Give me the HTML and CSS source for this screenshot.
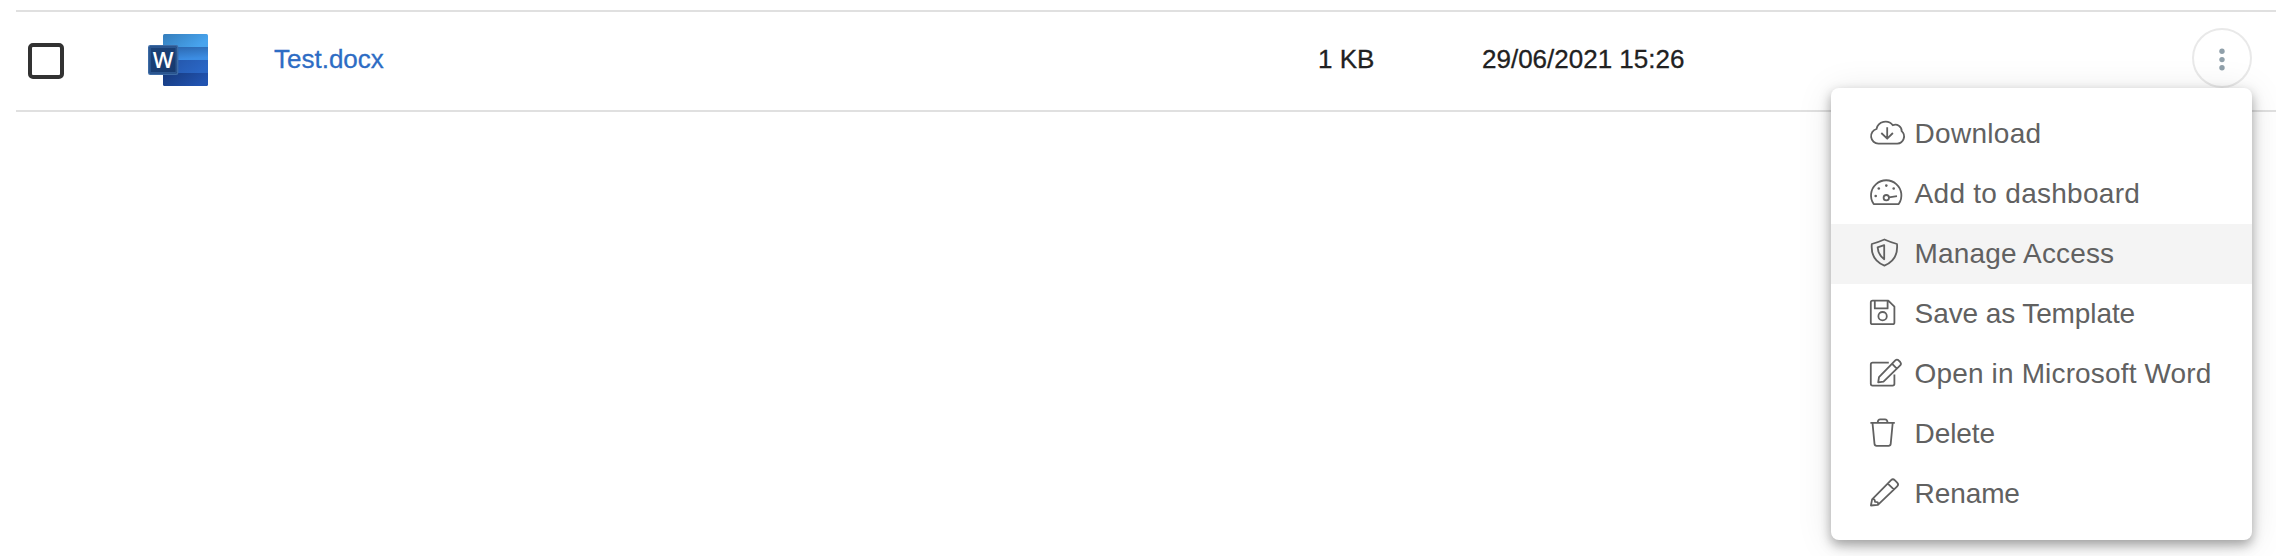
FILE: index.html
```html
<!DOCTYPE html>
<html lang="en">
<head>
<meta charset="utf-8">
<title>Files</title>
<link rel="stylesheet" href="styles.css">
</head>
<body>
<main class="files">
  <div class="row">
    <span class="checkbox" role="checkbox" aria-checked="false"></span>
    <svg class="file-icon" width="60" height="52" viewBox="0 0 60 52">
      <defs>
        <linearGradient id="b1" x2="1" y2=".4"><stop stop-color="#347dbb"/><stop offset="1" stop-color="#48a4ee"/></linearGradient>
        <linearGradient id="b2" x2=".3" y2="1"><stop stop-color="#2b65ac"/><stop offset="1" stop-color="#3c8de3"/></linearGradient>
        <linearGradient id="b3" x2="1" y2=".4"><stop stop-color="#2353a5"/><stop offset="1" stop-color="#2a66c4"/></linearGradient>
        <linearGradient id="b4" x2="1" y2=".4"><stop stop-color="#16397b"/><stop offset="1" stop-color="#2153b0"/></linearGradient>
        <linearGradient id="tile" x2="1" y2="1"><stop stop-color="#1b4379"/><stop offset="1" stop-color="#17396e"/></linearGradient>
        <clipPath id="page"><rect x="15" width="45" height="52" rx="1.5"/></clipPath>
      </defs>
      <g clip-path="url(#page)">
        <path fill="url(#b1)" d="M15 0h45v13H15z"/>
        <path fill="url(#b2)" d="M15 13h45v13H15z"/>
        <path fill="url(#b3)" d="M15 26h45v13H15z"/>
        <path fill="url(#b4)" d="M15 39h45v13H15z"/>
      </g>
      <rect x=".8" y="11.8" width="28.8" height="28.4" rx="1.5" fill="url(#tile)" stroke="#3d6ba5" stroke-width="1.6"/>
      <rect x="2.2" y="13.2" width="26" height="25.6" rx="1" fill="none" stroke="#2b5690" stroke-width="1.4"/>
      <text class="file-letter" x="15.2" y="33.7" text-anchor="middle">W</text>
    </svg>
    <a class="name">Test.docx</a>
    <span class="size">1 KB</span>
    <span class="date">29/06/2021 15:26</span>
    <span class="more" role="button" aria-label="More">
      <svg width="56" height="56" viewBox="0 0 56 56"><circle cx="28" cy="21.3" r="2.7"/><circle cx="28" cy="29.6" r="2.7"/><circle cx="28" cy="37.8" r="2.7"/></svg>
    </span>
  </div>
</main>
<ul class="menu">
  <li class="item wide">
    <svg class="icon" viewBox="0 0 36 30"><path d="M8.4 24.7H27.3A7.2 7.2 0 0 0 31.7 12.2A6.3 6.3 0 0 0 22.8 6.3A9.2 9.2 0 0 0 6.5 10A7.5 7.5 0 0 0 8.4 24.7ZM17.2 8.3V19.3M11.3 14L17.2 19.7L22.9 14"/></svg>
    <span>Download</span>
  </li>
  <li class="item wide">
    <svg class="icon" viewBox="0 0 36 30"><path d="M3.7 25.1A15.2 15.2 0 1 1 28.7 25.1ZM19 18.3L27 17.1"/><circle cx="16.3" cy="18.7" r="2.7"/><g class="dots"><circle cx="5.7" cy="17" r="1.3"/><circle cx="8.8" cy="9.5" r="1.3"/><circle cx="16.3" cy="6.6" r="1.3"/><circle cx="23.7" cy="9.5" r="1.3"/></g></svg>
    <span>Add to dashboard</span>
  </li>
  <li class="item active">
    <svg class="icon" viewBox="0 0 36 30"><path d="M14.4 .5C10.5 2.2 6.5 3.8 1.8 5C1 14 4 22.5 14.4 26.6C24.8 22.5 27.8 14 27 5C22.3 3.8 18.3 2.2 14.4 .5ZM14.2 6.1L7.6 8.3C7.8 12.8 9.8 17 14.2 20.2Z"/></svg>
    <span>Manage Access</span>
  </li>
  <li class="item tight">
    <svg class="icon" viewBox="0 0 36 30"><path d="M2.6 1.6H18.3L24.4 7.7V23.4Q24.4 25.2 22.6 25.2H2.6Q.8 25.2 .8 23.4V3.4Q.8 1.6 2.6 1.6ZM4.8 1.6V9.4H17.6V1.6"/><circle cx="12.6" cy="17.2" r="4.2"/></svg>
    <span>Save as Template</span>
  </li>
  <li class="item">
    <svg class="icon" viewBox="0 0 36 30"><path d="M18.8 3.6H2.6Q.8 3.6 .8 5.4V24.8Q.8 26.6 2.6 26.6H22.6Q24.4 26.6 24.4 24.8V15.6M8.2 23.4L9 18.2L25.3 1.4Q26.9 -.1 28.5 1.3L30.2 3Q31.7 4.7 30.2 6.3L13.5 22.6ZM22.2 4.8L26.8 9.6"/></svg>
    <span>Open in Microsoft Word</span>
  </li>
  <li class="item tight">
    <svg class="icon" viewBox="0 0 36 30"><path d="M.4 3.8H24.8M7.6 3.6Q8 .4 10.2 .4H15Q17.2 .4 17.6 3.6M2.5 4L4.5 24.9Q4.7 26.8 6.6 26.8H18.6Q20.5 26.8 20.7 24.9L22.7 4"/></svg>
    <span>Delete</span>
  </li>
  <li class="item tight">
    <svg class="icon" viewBox="0 0 36 30"><path d="M.9 26.5L2.1 20.4L21.1 1.2Q22.9 -.6 24.7 1.2L27.2 3.7Q29 5.5 27.2 7.3L7.9 25.8ZM17.8 4.6L23.8 10.4M2.1 20.4Q5 19.4 5 22.8Q9 22.5 7.9 25.8"/></svg>
    <span>Rename</span>
  </li>
</ul>
</body>
</html>
```
FILE: styles.css
```css
* { box-sizing: border-box; }

body {
  margin: 0;
  min-height: 556px;
  overflow: hidden;
  background: #fff;
  font-family: "Liberation Sans", Arial, Helvetica, sans-serif;
}

.files { padding: 10px 0 0 16px; }

.row {
  display: grid;
  grid-template-columns: 120px 126px 1044px 164px 710px 60px;
  align-items: center;
  height: 102px;
  padding-left: 12px;
  border-top: 2px solid #e0e0e0;
  border-bottom: 2px solid #e0e0e0;
  color: #212121;
  font-size: 26px;
  line-height: 30px;
  -webkit-text-stroke: 0.3px;
}

.checkbox {
  width: 36px;
  height: 36px;
  border: 4px solid #323232;
  border-radius: 5px;
}

.file-icon { display: block; margin-bottom: 2px; }

.file-letter {
  fill: #fff;
  font: 600 22px "Open Sans", sans-serif;
  -webkit-text-stroke: 0;
}

.name { color: #2d6cc4; }
.name, .size, .date { margin-bottom: 4px; }

.more {
  display: block;
  width: 60px;
  height: 60px;
  margin-bottom: 6px;
  border: 2px solid #e9e9e9;
  border-radius: 50%;
}

.more svg { display: block; fill: #90a0aa; }

/* Context menu, opened below the row's "more" button */
.menu {
  position: absolute;
  top: 88px;
  right: 24px;
  width: 421px;
  margin: 0;
  padding: 16px 0;
  border-radius: 8px;
  background: #fff;
  box-shadow: 0 5px 12px rgba(0, 0, 0, .34), 0 4px 36px rgba(0, 0, 0, .1);
  list-style: none;
}

.item {
  display: flex;
  align-items: center;
  height: 60px;
  padding-left: 39px;
  color: #616161;
  font-size: 28px;
  line-height: 32px;
  letter-spacing: .15px;
  white-space: nowrap;
}

.item.active { background: #f4f4f4; }
.item.wide { letter-spacing: .28px; }
.item.tight { letter-spacing: -.1px; }

.icon {
  width: 36px;
  height: 30px;
  margin-right: 8.6px;
  overflow: visible;
  fill: none;
  stroke: #616161;
  stroke-width: 1.8;
  stroke-linejoin: round;
}

.dots { fill: #616161; stroke: none; }
```
